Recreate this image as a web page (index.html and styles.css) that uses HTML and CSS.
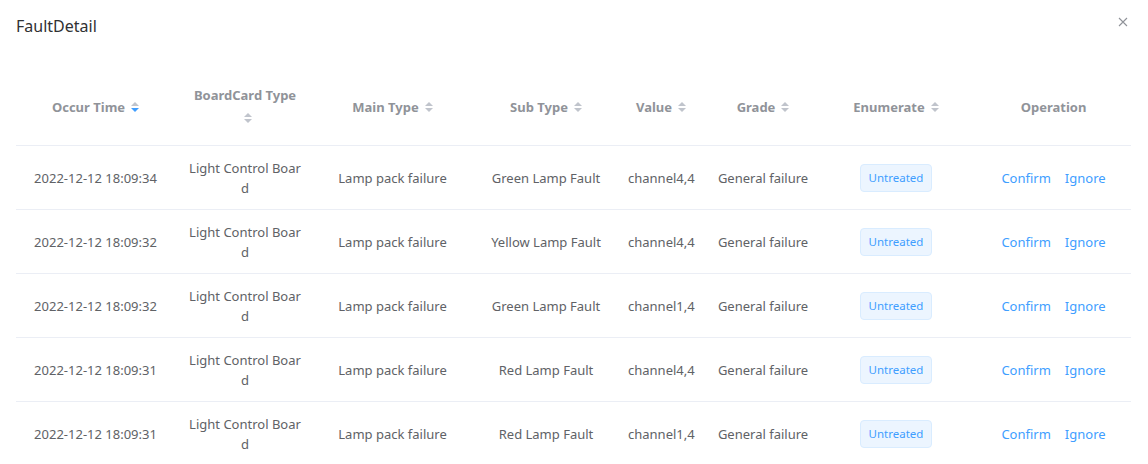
FILE: index.html
```html
<!DOCTYPE html>
<html>
    <head>
        <link rel="stylesheet" href="styles.css">
    </head>
    <body>
        <div class="dialog">
            <div class="dialog-header">
                <span class="dialog-title">FaultDetail</span>
                <button class="dialog-close" aria-label="Close">
                    <svg width="10" height="10" viewBox="0 0 10 10"><path d="M1 1L9 9M9 1L1 9" stroke="#909399" stroke-width="1.1" fill="none"/></svg>
                </button>
            </div>
            <div class="dialog-body">
                <table class="fault-table">
                    <colgroup>
                        <col style="width: 159px">
                        <col style="width: 140px">
                        <col style="width: 155px">
                        <col style="width: 152px">
                        <col style="width: 78px">
                        <col style="width: 126px">
                        <col style="width: 140px">
                        <col style="width: 165px">
                    </colgroup>
                    <thead>
                        <tr>
                            <th><div class="cell">Occur Time<span class="caret desc"><i class="up"></i><i class="down"></i></span></div></th>
                            <th><div class="cell board-head">BoardCard Type<span class="caret"><i class="up"></i><i class="down"></i></span></div></th>
                            <th><div class="cell">Main Type<span class="caret"><i class="up"></i><i class="down"></i></span></div></th>
                            <th><div class="cell">Sub Type<span class="caret"><i class="up"></i><i class="down"></i></span></div></th>
                            <th><div class="cell">Value<span class="caret"><i class="up"></i><i class="down"></i></span></div></th>
                            <th><div class="cell">Grade<span class="caret"><i class="up"></i><i class="down"></i></span></div></th>
                            <th><div class="cell">Enumerate<span class="caret"><i class="up"></i><i class="down"></i></span></div></th>
                            <th><div class="cell ops">Operation</div></th>
                        </tr>
                    </thead>
                    <tbody>
                        <tr>
                            <td><div class="cell">2022-12-12 18:09:34</div></td>
                            <td><div class="cell board">Light Control Board</div></td>
                            <td><div class="cell">Lamp pack failure</div></td>
                            <td><div class="cell">Green Lamp Fault</div></td>
                            <td><div class="cell">channel4,4</div></td>
                            <td><div class="cell">General failure</div></td>
                            <td><div class="cell"><span class="tag">Untreated</span></div></td>
                            <td><div class="cell ops"><a class="link">Confirm</a><a class="link">Ignore</a></div></td>
                        </tr>
                        <tr>
                            <td><div class="cell">2022-12-12 18:09:32</div></td>
                            <td><div class="cell board">Light Control Board</div></td>
                            <td><div class="cell">Lamp pack failure</div></td>
                            <td><div class="cell">Yellow Lamp Fault</div></td>
                            <td><div class="cell">channel4,4</div></td>
                            <td><div class="cell">General failure</div></td>
                            <td><div class="cell"><span class="tag">Untreated</span></div></td>
                            <td><div class="cell ops"><a class="link">Confirm</a><a class="link">Ignore</a></div></td>
                        </tr>
                        <tr>
                            <td><div class="cell">2022-12-12 18:09:32</div></td>
                            <td><div class="cell board">Light Control Board</div></td>
                            <td><div class="cell">Lamp pack failure</div></td>
                            <td><div class="cell">Green Lamp Fault</div></td>
                            <td><div class="cell">channel1,4</div></td>
                            <td><div class="cell">General failure</div></td>
                            <td><div class="cell"><span class="tag">Untreated</span></div></td>
                            <td><div class="cell ops"><a class="link">Confirm</a><a class="link">Ignore</a></div></td>
                        </tr>
                        <tr>
                            <td><div class="cell">2022-12-12 18:09:31</div></td>
                            <td><div class="cell board">Light Control Board</div></td>
                            <td><div class="cell">Lamp pack failure</div></td>
                            <td><div class="cell">Red Lamp Fault</div></td>
                            <td><div class="cell">channel4,4</div></td>
                            <td><div class="cell">General failure</div></td>
                            <td><div class="cell"><span class="tag">Untreated</span></div></td>
                            <td><div class="cell ops"><a class="link">Confirm</a><a class="link">Ignore</a></div></td>
                        </tr>
                        <tr>
                            <td><div class="cell">2022-12-12 18:09:31</div></td>
                            <td><div class="cell board">Light Control Board</div></td>
                            <td><div class="cell">Lamp pack failure</div></td>
                            <td><div class="cell">Red Lamp Fault</div></td>
                            <td><div class="cell">channel1,4</div></td>
                            <td><div class="cell">General failure</div></td>
                            <td><div class="cell"><span class="tag">Untreated</span></div></td>
                            <td><div class="cell ops"><a class="link">Confirm</a><a class="link">Ignore</a></div></td>
                        </tr>
                    </tbody>
                </table>
            </div>
        </div>
    </body>
</html>
```

FILE: styles.css
```css
body {
    margin: 0;
    background: #fff;
    font-family: "Noto Sans", "Open Sans", sans-serif;
    color: #606266;
    overflow: hidden;
}
.dialog {
    width: 1148px;
}
.dialog-header {
    display: flex;
    align-items: center;
    justify-content: space-between;
    height: 51px;
    padding: 0 20px 0 16px;
}
.dialog-title {
    font-size: 16px;
    color: #303133;
}
.dialog-close {
    background: none;
    border: 0;
    padding: 0;
    margin-top: -8px;
    display: flex;
}
.dialog-body {
    padding: 25px 17px 0 16px;
}
.fault-table {
    width: 1115px;
    table-layout: fixed;
    border-collapse: collapse;
    font-size: 13px;
}
.fault-table th,
.fault-table td {
    border-bottom: 1px solid #ebeef5;
    text-align: center;
    vertical-align: middle;
}
.fault-table th {
    padding: 8px 0 15px;
    color: #909399;
    font-weight: bold;
}
.fault-table th .cell {
    line-height: 23px;
}
.fault-table td {
    padding: 12px 0 11px;
}
.cell {
    padding: 0 6px;
    line-height: 20px;
    white-space: nowrap;
}
.cell.board,
.cell.board-head {
    white-space: normal;
    word-break: break-all;
    width: 116px;
    margin: 0 auto;
    padding: 0;
}
.cell.board-head {
    width: 108px;
}
.cell.ops {
    padding: 0 2px 0 12px;
}
.caret {
    display: inline-flex;
    flex-direction: column;
    vertical-align: middle;
    margin-left: 6px;
    gap: 2px;
    margin-top: -2px;
}
.caret i {
    width: 0;
    height: 0;
    border-left: 4px solid transparent;
    border-right: 4px solid transparent;
}
.caret .up {
    border-bottom: 4px solid #c0c4cc;
}
.caret .down {
    border-top: 4px solid #c0c4cc;
}
.caret.desc .down {
    border-top-color: #409eff;
}
.tag {
    display: inline-block;
    height: 28px;
    line-height: 26px;
    padding: 0 8px;
    font-size: 11.5px;
    color: #409eff;
    background: #ecf5ff;
    border: 1px solid #d9ecff;
    border-radius: 4px;
    box-sizing: border-box;
    vertical-align: middle;
}
.link {
    color: #409eff;
    cursor: pointer;
}
.link + .link {
    margin-left: 14px;
}
```
